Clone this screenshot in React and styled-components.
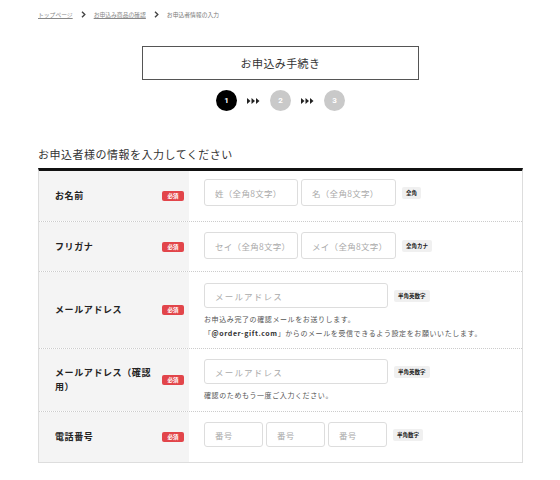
import React from "react";
import styled, { createGlobalStyle } from "styled-components";

const GlobalStyle = createGlobalStyle`
  * { box-sizing: border-box; }
  body {
    margin: 0;
    background: #fff;
    color: #333;
    font-family: "Noto Sans CJK JP", "Noto Sans", sans-serif;
  }
`;

const Arrows = () => (
  <svg width="13" height="6" viewBox="0 0 13 6">
    <path d="M0 0 L3.5 3 L0 6 Z" fill="#222" />
    <path d="M4.5 0 L8 3 L4.5 6 Z" fill="#222" />
    <path d="M9 0 L12.5 3 L9 6 Z" fill="#222" />
  </svg>
);

const Chevron = () => (
  <svg width="5" height="7" viewBox="0 0 5 7">
    <path d="M1 0.8 L3.8 3.5 L1 6.2" stroke="#444" strokeWidth="1.4" fill="none" />
  </svg>
);

const rows = [
  { label: "お名前", h: 51, pt: 8, kind: "name" },
  { label: "フリガナ", h: 50, pt: 10, kind: "kana" },
  { label: "メールアドレス", h: 77, pt: 11, kind: "mail" },
  { label: "メールアドレス（確認用）", h: 63, pt: 10, kind: "mail2" },
  { label: "電話番号", h: 50, pt: 10, kind: "tel", last: true },
];

const renderField = (kind) => {
  switch (kind) {
    case "name":
      return (
        <FieldLine>
          <Input $w={94} $h={27} placeholder="姓（全角8文字）" />
          <Input $w={95} $h={27} placeholder="名（全角8文字）" />
          <Tag>全角</Tag>
        </FieldLine>
      );
    case "kana":
      return (
        <FieldLine>
          <Input $w={94} $h={27} placeholder="セイ（全角8文字）" />
          <Input $w={95} $h={27} placeholder="メイ（全角8文字）" />
          <Tag>全角カナ</Tag>
        </FieldLine>
      );
    case "mail":
      return (
        <>
          <FieldLine>
            <Input $w={184} $h={25} $wide placeholder="メールアドレス" />
            <Tag>半角英数字</Tag>
          </FieldLine>
          <Help>
            お申込み完了の確認メールをお送りします。
            <br />
            「<b>@order-gift.com</b>」からのメールを受信できるよう設定をお願いいたします。
          </Help>
        </>
      );
    case "mail2":
      return (
        <>
          <FieldLine>
            <Input $w={184} $h={25} $wide placeholder="メールアドレス" />
            <Tag>半角英数字</Tag>
          </FieldLine>
          <Help>確認のためもう一度ご入力ください。</Help>
        </>
      );
    default:
      return (
        <FieldLine>
          <Input $w={59} $h={25} placeholder="番号" />
          <Input $w={59} $h={25} placeholder="番号" />
          <Input $w={59} $h={25} placeholder="番号" />
          <Tag>半角数字</Tag>
        </FieldLine>
      );
  }
};

const App = () => {
  return (
    <Page>
      <GlobalStyle />
      <Breadcrumb>
        <Crumb href="#">トップページ</Crumb>
        <Chevron />
        <Crumb href="#">お申込み商品の確認</Crumb>
        <Chevron />
        <Current>お申込者情報の入力</Current>
      </Breadcrumb>

      <TitleBox>お申込み手続き</TitleBox>

      <Steps>
        <Step $active>1</Step>
        <Arrows />
        <Step>2</Step>
        <Arrows />
        <Step>3</Step>
      </Steps>

      <Heading>お申込者様の情報を入力してください</Heading>

      <Table>
        {rows.map((r) => (
          <Row key={r.label} $h={r.h} $last={r.last}>
            <LabelCell>
              <LabelText>{r.label}</LabelText>
              <Required>必須</Required>
            </LabelCell>
            <FieldCell $pt={r.pt}>{renderField(r.kind)}</FieldCell>
          </Row>
        ))}
      </Table>
    </Page>
  );
};

export default App;

// Styled Components
const Page = styled.div`
  width: 560px;
  padding: 0 37px 0 38px;
`;

const Breadcrumb = styled.nav`
  height: 28px;
  display: flex;
  align-items: center;
  gap: 8px;
  font-size: 5.8px;
`;

const Crumb = styled.a`
  color: #888;
  text-decoration: underline;
`;

const Current = styled.span`
  color: #777;
`;

const TitleBox = styled.div`
  width: 277px;
  height: 34px;
  margin: 18px auto 0;
  border: 1px solid #555;
  display: flex;
  align-items: center;
  justify-content: center;
  font-size: 11px;
  letter-spacing: 0.4px;
  color: #333;
`;

const Steps = styled.div`
  margin-top: 10px;
  height: 21px;
  display: flex;
  align-items: center;
  justify-content: center;
  gap: 10px;
`;

const Step = styled.div`
  width: 21px;
  height: 21px;
  border-radius: 50%;
  background: ${(p) => (p.$active ? "#000" : "#c9c9c9")};
  color: #fff;
  font-family: Roboto, "Liberation Sans", sans-serif;
  font-weight: 700;
  font-size: 8px;
  display: flex;
  align-items: center;
  justify-content: center;
`;

const Heading = styled.h2`
  margin: 35px 0 6px;
  font-size: 11px;
  line-height: 16px;
  font-weight: 400;
  letter-spacing: 0.5px;
  color: #333;
`;

const Table = styled.div`
  border-top: 3px solid #111;
  border-left: 1px solid #ddd;
  border-right: 1px solid #ddd;
  border-bottom: 1px solid #ddd;
`;

const Row = styled.div`
  display: grid;
  grid-template-columns: 150px 1fr;
  min-height: ${(p) => p.$h}px;
  border-bottom: ${(p) => (p.$last ? "none" : "1px dotted #ccc")};
`;

const LabelCell = styled.div`
  background: #f4f4f4;
  display: flex;
  align-items: center;
  justify-content: space-between;
  padding: 0 5px 0 16px;
`;

const LabelText = styled.span`
  max-width: 96px;
  font-size: 9px;
  line-height: 14px;
  font-weight: 700;
  letter-spacing: 0.6px;
  color: #222;
`;

const Required = styled.span`
  width: 22px;
  height: 10px;
  border-radius: 2px;
  background: #e2454a;
  color: #fff;
  font-size: 5.5px;
  font-weight: 700;
  display: flex;
  align-items: center;
  justify-content: center;
`;

const FieldCell = styled.div`
  padding: ${(p) => p.$pt}px 15px 8px;
  display: flex;
  flex-direction: column;
  gap: 4px;
`;

const FieldLine = styled.div`
  display: flex;
  align-items: center;
  gap: 3px;
`;

const Input = styled.input`
  width: ${(p) => p.$w}px;
  height: ${(p) => p.$h}px;
  border: 1px solid #ddd;
  border-radius: 3px;
  padding: 0 10px;
  font-family: "Noto Sans CJK JP", sans-serif;
  font-size: 8.5px;
  letter-spacing: ${(p) => (p.$wide ? "1.2px" : "0.3px")};
  color: #333;
  background: #fff;
  outline: none;

  &::placeholder {
    color: #aaa;
  }
`;

const Tag = styled.span`
  margin-left: 3px;
  padding: 2px 4px;
  border-radius: 2px;
  background: #f0f0f0;
  font-size: 5.5px;
  font-weight: 700;
  color: #222;
`;

const Help = styled.p`
  margin: 0;
  font-size: 7px;
  line-height: 14px;
  letter-spacing: 0.6px;
  color: #555;

  b {
    font-weight: 700;
    color: #333;
  }
`;
